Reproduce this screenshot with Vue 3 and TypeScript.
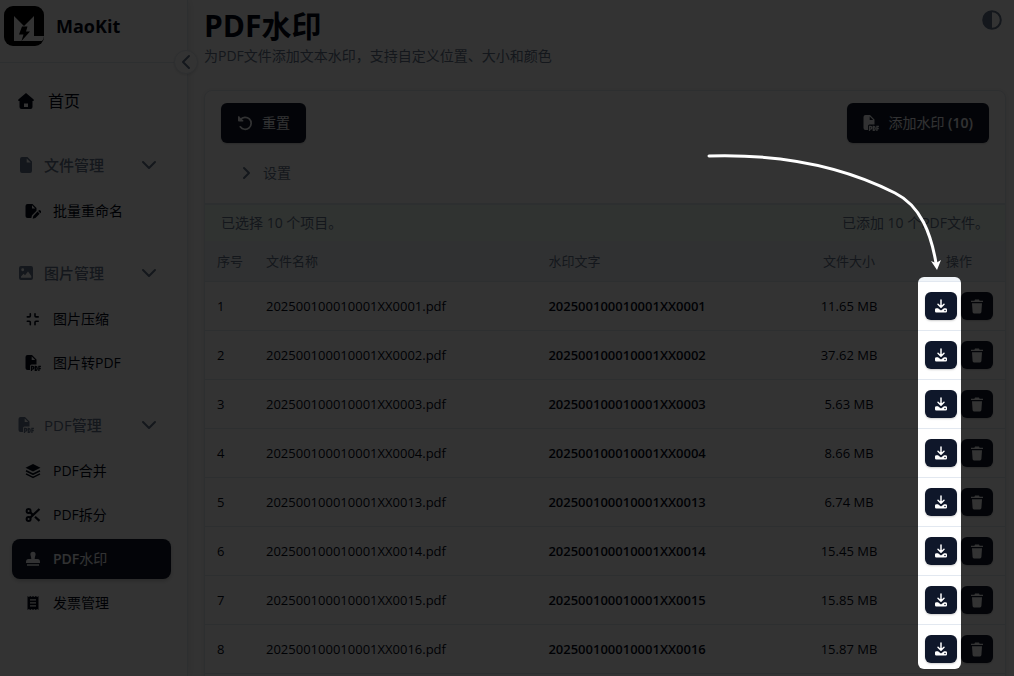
<script setup lang="ts">
import { ref } from 'vue'

interface NavItem {
  latin?: string
  label: string
  icon: string
  active?: boolean
}
interface NavGroup {
  label: string
  icon: string
  items: NavItem[]
}
interface FileRow {
  id: number
  code: string
  size: string
}

const groups: NavGroup[] = [
  { label: '文件管理', icon: 'file', items: [{ label: '批量重命名', icon: 'rename' }] },
  {
    label: '图片管理',
    icon: 'image',
    items: [
      { label: '图片压缩', icon: 'compress' },
      { label: '图片转PDF', icon: 'pdf' },
    ],
  },
  {
    label: 'PDF管理',
    icon: 'pdf',
    items: [
      { latin: 'PDF', label: '合并', icon: 'layers' },
      { latin: 'PDF', label: '拆分', icon: 'scissors' },
      { latin: 'PDF', label: '水印', icon: 'stamp', active: true },
      { label: '发票管理', icon: 'receipt' },
    ],
  },
]

const files = ref<FileRow[]>([
  { id: 1, code: '202500100010001XX0001', size: '11.65 MB' },
  { id: 2, code: '202500100010001XX0002', size: '37.62 MB' },
  { id: 3, code: '202500100010001XX0003', size: '5.63 MB' },
  { id: 4, code: '202500100010001XX0004', size: '8.66 MB' },
  { id: 5, code: '202500100010001XX0013', size: '6.74 MB' },
  { id: 6, code: '202500100010001XX0014', size: '15.45 MB' },
  { id: 7, code: '202500100010001XX0015', size: '15.85 MB' },
  { id: 8, code: '202500100010001XX0016', size: '15.87 MB' },
])
const total = 10
</script>

<template>
  <div class="page">
    <svg class="defs" aria-hidden="true">
      <symbol id="i-home" viewBox="0 0 16 16">
        <path fill="currentColor" fill-rule="evenodd" d="M8 0 .3 6.6v1.3H1.5V14q0 2 2 2h9q2 0 2-2V7.900h1.200V6.600ZM6 14v-3.500h4V14Z" />
      </symbol>
      <symbol id="i-file" viewBox="0 0 16 16">
        <path fill="currentColor" fill-rule="evenodd" d="M4 0h5.500L14 4.600V14q0 2-2 2H4q-2 0-2-2V2Q2 0 4 0Zm4.700 1.500V5.400h4Z" />
      </symbol>
      <symbol id="i-rename" viewBox="0 0 16 16">
        <path fill="currentColor" fill-rule="evenodd" d="M2.500 1H7.500L11.500 5V7.800L7 12.300 6.300 15H2.500Q.5 15 .5 13V3Q.5 1 2.500 1ZM7 2.300V5.500h3.200Z" />
        <path fill="currentColor" d="m12.500 8.600 2.200 2.200-4.300 4.200-2.700.7.600-2.800Zm.6-.6.8-.8q.6-.5 1.200 0l1 1q.5.600 0 1.200l-.8.800Z" />
      </symbol>
      <symbol id="i-image" viewBox="0 0 16 16">
        <path fill="currentColor" fill-rule="evenodd" d="M3 1h10q2 0 2 2v10q0 2-2 2H3q-2 0-2-2V3q0-2 2-2Zm1.700 2.300a1.400 1.400 0 1 0 0 2.900 1.400 1.400 0 0 0 0-2.900ZM3 12.800h10.300V11L10 6.500 7 10.300 5.600 8.700 3 11.500Z" />
      </symbol>
      <symbol id="i-compress" viewBox="0 0 16 16">
        <g fill="none" stroke="currentColor" stroke-width="1.600" stroke-linecap="round">
          <path d="M2.300 5.900H4.300Q5.300 5.900 5.300 4.900V2.700M10 2.700V4.900Q10 5.900 11 5.900H13.200M2.300 10.300H4.300Q5.300 10.300 5.300 11.300V13.700M10 13.700V11.300Q10 10.300 11 10.300H13.200" />
        </g>
      </symbol>
      <symbol id="i-pdf" viewBox="0 0 16 16">
        <path fill="currentColor" fill-rule="evenodd" d="M2.500 0H7l4.500 4.500V9.500H6.500q-1.500 0-1.500 1.500V15H2.500Q.5 15 .5 13V2Q.5 0 2.500 0ZM6.700 1.500V5h3.500Z" />
        <path fill="none" stroke="currentColor" stroke-width="1.300" d="M6.500 16v-4.500h1q1.300 0 1.300 1.300T7.500 14.100h-1M10.300 11.500v3.900h.5q1.400 0 1.400-1.900t-1.400-2ZM13.900 16v-4.500h2M13.900 13.700h1.900" />
      </symbol>
      <symbol id="i-layers" viewBox="0 0 16 16">
        <path fill="currentColor" d="m8 1 7.500 3.700L8 8.500.5 4.700Z" />
        <path fill="none" stroke="currentColor" stroke-width="1.600" stroke-linejoin="round" d="M1 7.800l7 3.500 7-3.500M1 10.900l7 3.500 7-3.500" />
      </symbol>
      <symbol id="i-scissors" viewBox="0 0 16 16">
        <g fill="none" stroke="currentColor" stroke-width="2">
          <circle cx="3.600" cy="3.900" r="2" />
          <circle cx="3.600" cy="12.100" r="2" />
          <path stroke-width="2.200" d="M5.200 10.600 14.500 2M5.200 5.400l3 2.700M10 9.700l4.500 4.200" />
        </g>
      </symbol>
      <symbol id="i-stamp" viewBox="0 0 16 16">
        <path fill="currentColor" d="M5.400 3.300a2.600 2.600 0 1 1 5.200 0C10.600 5 9.700 5.500 9.700 8h2.800q2.500 0 2.500 3v1H1V11Q1 8 3.500 8h2.800c0-2.500-.9-3-.9-4.700ZM2 13.200h12v1.600H2Z" />
      </symbol>
      <symbol id="i-receipt" viewBox="0 0 16 16">
        <path fill="currentColor" fill-rule="evenodd" d="M2.500 1l1.400 1 1.400-1 1.400 1L8 1l1.400 1 1.400-1 1.400 1 1.300-1v14l-1.300-1-1.400 1-1.400-1L8 15l-1.300-1-1.400 1-1.400-1-1.400 1ZM5 4.300v1.300h6V4.300Zm0 3v1.300h6V7.300Zm0 3v1.300h6v-1.300Z" />
      </symbol>
      <symbol id="i-undo" viewBox="0 0 16 16">
        <path fill="none" stroke="currentColor" stroke-width="1.700" stroke-linecap="round" d="M3.500 4.500A6 6 0 1 1 3.300 11.800" />
        <path fill="currentColor" d="M1 1.500q.1-.7.800-.2L6.300 5.600q.4.600-.3.800H1.700Q1 6.300 1 5.600Z" />
      </symbol>
      <symbol id="i-download" viewBox="0 0 14 14">
        <path fill="none" stroke="currentColor" stroke-width="1.500" stroke-linecap="round" stroke-linejoin="round" d="M7 1v6.500M4 5.300l3 3 3-3" />
        <path fill="currentColor" fill-rule="evenodd" d="M2.500 9.200H4L7 11.400l3-2.200h1.500Q13 9.200 13 10.500v1.800q0 1.300-1.300 1.300H2.300Q1 13.600 1 12.300V10.500q0-1.300 1.500-1.300Zm8.500 1.500a.8.800 0 1 0 0 1.600.8.800 0 0 0 0-1.600Z" />
      </symbol>
      <symbol id="i-trash" viewBox="0 0 14 14">
        <path fill="currentColor" d="M1 1.200h3.400L5 0h4l.6 1.200H13V2.600H1ZM2 3.800h10L11.400 12.600q-.1 1.400-1.400 1.400H4Q2.700 14 2.600 12.600Z" />
      </symbol>
      <symbol id="i-chevron" viewBox="0 0 16 16">
        <path fill="none" stroke="currentColor" stroke-width="2" stroke-linecap="round" stroke-linejoin="round" d="M2 5l6 6 6-6" />
      </symbol>
    </svg>

    <aside class="sidebar">
      <div class="brand">
        <svg class="logo" viewBox="0 0 40 40" aria-hidden="true">
          <rect width="40" height="40" rx="9" fill="#000" />
          <path fill="#fff" d="M10 10 20 20 30 10V30H40Q40 33 38 35H10Z" />
          <path fill="#000" d="M18 20.500h5.500L22 25.500h4L17.500 35l2-6.500H15Z" />
        </svg>
        <span class="brand-name">MaoKit</span>
        <button class="collapse" type="button" aria-label="收起侧栏">
          <svg viewBox="0 0 16 16"><path fill="none" stroke="currentColor" stroke-width="2" stroke-linecap="round" stroke-linejoin="round" d="M11 2 5 8l6 6" /></svg>
        </button>
      </div>
      <nav class="nav">
        <a class="home" href="#"><svg><use href="#i-home" /></svg>首页</a>
        <section v-for="g in groups" :key="g.label" class="group">
          <button class="group-head" type="button">
            <svg><use :href="'#i-' + g.icon" /></svg>
            <span>{{ g.label }}</span>
            <svg class="chev"><use href="#i-chevron" /></svg>
          </button>
          <div class="items">
            <a v-for="it in g.items" :key="it.label" href="#" class="item" :class="{ active: it.active }">
              <svg><use :href="'#i-' + it.icon" /></svg>
              <span><span v-if="it.latin" class="latin">{{ it.latin }}</span>{{ it.label }}</span>
            </a>
          </div>
        </section>
      </nav>
    </aside>

    <main class="main">
      <button class="theme" type="button" aria-label="切换主题">
        <svg viewBox="0 0 20 20"><circle cx="10" cy="10" r="8.800" fill="none" stroke="currentColor" stroke-width="2" /><path fill="currentColor" d="M10 1a9 9 0 0 0 0 18Z" /></svg>
      </button>
      <h1>PDF水印</h1>
      <p class="subtitle">为PDF文件添加文本水印，支持自定义位置、大小和颜色</p>

      <section class="card">
        <div class="toolbar">
          <button class="btn" type="button"><svg><use href="#i-undo" /></svg>重置</button>
          <button class="btn" type="button">
            <svg><use href="#i-pdf" /></svg>
            <span>添加水印 <span class="count">({{ total }})</span></span>
          </button>
        </div>
        <button class="settings" type="button">
          <svg viewBox="0 0 16 16"><path fill="none" stroke="currentColor" stroke-width="2" stroke-linecap="round" stroke-linejoin="round" d="m5 3 5 5-5 5" /></svg>设置
        </button>
        <div class="status">
          <span>已选择 {{ total }} 个项目。</span>
          <span>已添加 {{ total }} 个PDF文件。</span>
        </div>
        <table>
          <colgroup>
            <col class="c-no" /><col class="c-name" /><col /><col class="c-size" /><col class="c-ops" />
          </colgroup>
          <thead>
            <tr>
              <th>序号</th>
              <th>文件名称</th>
              <th>水印文字</th>
              <th class="mid">文件大小</th>
              <th class="mid">操作</th>
            </tr>
          </thead>
          <tbody>
            <tr v-for="f in files" :key="f.id">
              <td>{{ f.id }}</td>
              <td>{{ f.code }}.pdf</td>
              <td class="strong">{{ f.code }}</td>
              <td class="mid">{{ f.size }}</td>
              <td>
                <div class="ops">
                  <button type="button" aria-label="下载"><svg><use href="#i-download" /></svg></button>
                  <button type="button" aria-label="删除"><svg class="bin"><use href="#i-trash" /></svg></button>
                </div>
              </td>
            </tr>
          </tbody>
        </table>
      </section>
    </main>

    <div class="spotlight"></div>
    <svg class="arrow" viewBox="0 0 240 120" aria-hidden="true">
      <path fill="none" stroke="#fff" stroke-width="3" stroke-linecap="round" d="M5 6C71 4 134 14 191 43C217 56 227 84 232 113" />
      <path fill="#fff" d="M233 120l-6-9 5 2 5-3Z" />
    </svg>
  </div>
</template>

<style>
html,
body {
  margin: 0;
  background: #fff;
}
</style>

<style scoped>
.page {
  position: relative;
  display: flex;
  height: 100vh;
  overflow: hidden;
  background: #fff;
  color: #020817;
  font-family: 'Open Sans', 'Noto Sans CJK SC', sans-serif;
  font-size: 14px;
  line-height: 20px;
}
.page * {
  box-sizing: border-box;
}
.defs {
  position: absolute;
  width: 0;
  height: 0;
}
button {
  margin: 0;
  padding: 0;
  border: 0;
  background: none;
  color: inherit;
  font: inherit;
  cursor: pointer;
}
a {
  color: inherit;
  text-decoration: none;
}
svg {
  flex: none;
  width: 16px;
  height: 16px;
}
.sidebar {
  flex: none;
  width: 188px;
  border-right: 1px solid #e2e8f0;
  box-shadow: 0 0 10px rgba(0, 0, 0, 0.12);
}
.brand {
  position: relative;
  display: flex;
  align-items: center;
  gap: 12px;
  height: 63px;
  padding: 0 4px 10px;
  border-bottom: 1px solid #e2e8f0;
}
.logo {
  width: 40px;
  height: 40px;
}
.brand-name {
  font-size: 18px;
  font-weight: 700;
}
.collapse {
  position: absolute;
  right: -11px;
  bottom: -12px;
  display: grid;
  place-items: center;
  width: 24px;
  height: 24px;
  border-radius: 12px;
  border: 1px solid #e2e8f0;
  background: #fff;
  color: #64748b;
  box-shadow: 0 1px 3px rgba(0, 0, 0, 0.12);
}
.nav {
  padding: 16px 16px 16px 12px;
}
.home {
  display: flex;
  align-items: center;
  gap: 14px;
  height: 44px;
  padding-left: 6px;
  font-size: 16px;
}
.group {
  margin-top: 24px;
}
.group-head {
  display: flex;
  align-items: center;
  gap: 10px;
  width: 100%;
  height: 36px;
  padding: 0 14px 0 6px;
  color: #64748b;
  font-size: 15px;
  font-weight: 500;
}
.chev {
  margin-left: auto;
}
.items {
  display: flex;
  flex-direction: column;
  gap: 4px;
  margin-top: 8px;
}
.item {
  display: flex;
  align-items: center;
  gap: 12px;
  height: 40px;
  padding-left: 13px;
  border-radius: 8px;
}
.item.active {
  background: #0f172a;
  color: #f8fafc;
  box-shadow: 0 2px 4px rgba(0, 0, 0, 0.2);
}
.active .latin,
.count {
  font-weight: 600;
}
.main {
  position: relative;
  flex: 1;
  min-width: 0;
  padding: 8px 8px 0 16px;
}
.theme {
  position: absolute;
  top: 10px;
  right: 12px;
  width: 20px;
  height: 20px;
  color: #64748b;
}
.theme svg {
  display: block;
  width: 20px;
  height: 20px;
}
h1 {
  margin: 0;
  font-size: 30px;
  line-height: 36px;
  font-weight: 700;
}
.subtitle {
  margin: 2px 0 24px;
  color: #64748b;
}
.card {
  padding-bottom: 48px;
  border: 1px solid #e2e8f0;
  border-radius: 8px;
  background: #fff;
  box-shadow: 0 1px 6px rgba(0, 0, 0, 0.1);
}
.toolbar {
  display: flex;
  justify-content: space-between;
  padding: 12px 16px 0;
}
.btn {
  display: flex;
  align-items: center;
  gap: 9px;
  height: 40px;
  padding: 0 16px;
  border-radius: 6px;
  background: #0f172a;
  color: #f8fafc;
  box-shadow: 0 1px 2px rgba(0, 0, 0, 0.2);
}
.settings {
  display: flex;
  align-items: center;
  gap: 8px;
  height: 60px;
  padding-left: 34px;
  color: #64748b;
}
.status {
  display: flex;
  justify-content: space-between;
  padding: 8px 16px;
  border-top: 2px solid #e2e8f0;
  background: #f0fdf4;
  color: #64748b;
}
table {
  width: 100%;
  border-collapse: separate;
  border-spacing: 0;
  table-layout: fixed;
  font-size: 13px;
}
.c-no {
  width: 49px;
}
.c-name {
  width: 35.3%;
}
.c-size {
  width: 128px;
}
.c-ops {
  width: 92px;
}
th {
  height: 41px;
  padding: 0 12px;
  border-bottom: 1px solid #e2e8f0;
  background: #f1f5f9;
  color: #64748b;
  font-weight: 400;
  text-align: left;
  white-space: nowrap;
}
td {
  height: 49px;
  padding: 0 12px;
  border-bottom: 1px solid #e2e8f0;
}
.strong {
  font-weight: 600;
}
th.mid,
td.mid {
  text-align: center;
}
.ops {
  display: flex;
  justify-content: center;
  gap: 4px;
}
.ops button {
  display: grid;
  flex: none;
  place-items: center;
  width: 32px;
  height: 28px;
  border-radius: 6px;
  background: #0f172a;
  color: #fff;
  box-shadow: 0 1px 2px rgba(0, 0, 0, 0.2);
}
.ops svg {
  width: 14px;
  height: 14px;
}
.ops .bin {
  height: 15px;
}
.spotlight {
  position: absolute;
  top: 277px;
  right: 53px;
  width: 43px;
  height: 392px;
  border-radius: 6px;
  box-shadow: 0 0 0 200vmax rgba(0, 0, 0, 0.8);
  pointer-events: none;
}
.arrow {
  position: absolute;
  top: 150px;
  right: 70px;
  width: 240px;
  height: 120px;
  pointer-events: none;
}
</style>
